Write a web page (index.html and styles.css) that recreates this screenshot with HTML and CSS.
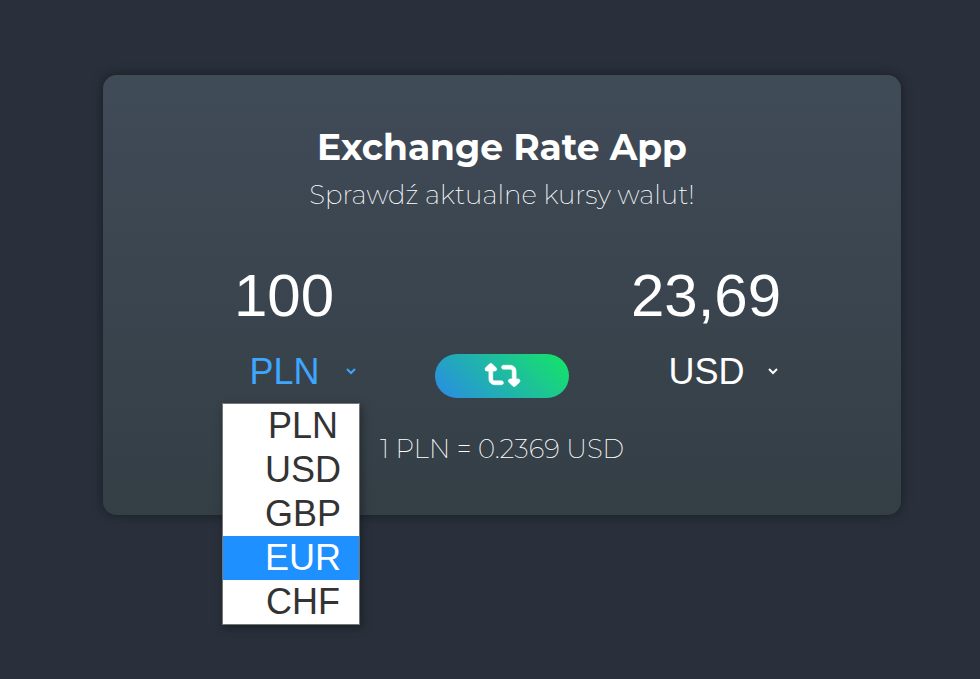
FILE: index.html
```html
<!DOCTYPE html>
<html lang="pl">
<head>
<meta charset="utf-8">
<meta name="viewport" content="width=device-width, initial-scale=1">
<title>Exchange Rate App</title>
<link rel="stylesheet" href="styles.css">
</head>
<body>
<main class="card">
  <h1 class="title">Exchange Rate App</h1>
  <p class="subtitle">Sprawdź aktualne kursy walut!</p>
  <div class="converter">
    <div class="side">
      <input class="amount" type="text" inputmode="decimal" value="100" aria-label="Kwota">
      <div class="picker picker-open">
        <select class="currency" aria-label="Waluta źródłowa">
          <option selected>PLN</option><option>USD</option><option>GBP</option><option>EUR</option><option>CHF</option>
        </select>
        <svg class="chevron" viewBox="0 0 10 8" aria-hidden="true"><path d="M1 2l4 4 4-4"/></svg>
        <ul class="menu">
          <li class="item">PLN</li>
          <li class="item">USD</li>
          <li class="item">GBP</li>
          <li class="item item-active">EUR</li>
          <li class="item">CHF</li>
        </ul>
      </div>
    </div>
    <button class="swap" type="button" aria-label="Zamień waluty">
      <svg class="swap-icon" viewBox="0 0 576 512" aria-hidden="true"><path d="M272 416c17.700 0 32-14.300 32-32s-14.300-32-32-32H160c-17.700 0-32-14.300-32-32V192h32c12.900 0 24.600-7.800 29.600-19.800s2.200-25.700-6.900-34.900l-64-64c-12.500-12.500-32.800-12.500-45.300 0l-64 64c-9.200 9.200-11.900 22.900-6.900 34.900s16.600 19.800 29.600 19.800h32v128c0 53 43 96 96 96H272zM304 96c-17.700 0-32 14.300-32 32s14.300 32 32 32h112c17.700 0 32 14.300 32 32v128H416c-12.900 0-24.600 7.800-29.600 19.800s-2.200 25.700 6.900 34.900l64 64c12.500 12.500 32.800 12.500 45.300 0l64-64c9.200-9.200 11.900-22.900 6.900-34.900s-16.600-19.800-29.600-19.800h-32V192c0-53-43-96-96-96H304z"/></svg>
    </button>
    <div class="side">
      <input class="amount" type="text" value="23,69" readonly aria-label="Wynik">
      <div class="picker">
        <select class="currency" aria-label="Waluta docelowa">
          <option>PLN</option><option selected>USD</option><option>GBP</option><option>EUR</option><option>CHF</option>
        </select>
        <svg class="chevron" viewBox="0 0 10 8" aria-hidden="true"><path d="M1 2l4 4 4-4"/></svg>
      </div>
    </div>
  </div>
  <p class="rate">1 PLN = 0.2369 USD</p>
</main>
</body>
</html>
```
FILE: styles.css
```css
* {
  box-sizing: border-box;
}

body {
  margin: 0;
  padding: 75px 79px 52px 103px;
  min-height: 100vh;
  background: #29303b;
  color: #fff;
  font-family: Montserrat, Inter, sans-serif;
}

.card {
  padding: 50px 68px;
  border-radius: 14px;
  background: linear-gradient(#404b58, #343e45);
  box-shadow: 0 0 12px rgba(0, 0, 0, 0.4);
  text-align: center;
}

.title {
  margin: 0 0 10px;
  font-size: 36px;
  line-height: 44px;
  font-weight: 700;
}

.subtitle,
.rate {
  margin: 0;
  font-size: 26px;
  line-height: 32px;
  font-weight: 200;
}

.rate {
  margin-top: 30px;
}

.converter {
  display: grid;
  grid-template-columns: 1fr 134px 1fr;
  gap: 24px;
  align-items: end;
  margin-top: 49px;
}

.side {
  display: flex;
  flex-direction: column;
  align-items: center;
  gap: 10px;
}

.amount {
  width: 100%;
  height: 70px;
  padding: 0 14px 0 0;
  border: 0;
  background: none;
  color: inherit;
  font: 60px "Liberation Sans", Arial, sans-serif;
  text-align: center;
  outline: none;
}

.picker {
  position: relative;
  width: 138px;
  font: 36px "Liberation Sans", Arial, sans-serif;
}

.picker-open {
  color: #3ea6ff;
}

.currency {
  display: block;
  width: 100%;
  height: 63px;
  padding: 0 13px 1px 0;
  border: 0;
  appearance: none;
  background: none;
  color: inherit;
  font: inherit;
  text-align: center;
  text-align-last: center;
  outline: none;
}

.currency option {
  color: #333;
}

.chevron {
  position: absolute;
  top: 27px;
  right: 4px;
  width: 10px;
  height: 8px;
  fill: none;
  stroke: currentColor;
  stroke-width: 2;
  pointer-events: none;
}

.menu {
  position: absolute;
  top: 100%;
  left: 0;
  z-index: 1;
  width: 100%;
  margin: 0;
  padding: 0;
  border: 1px solid #767676;
  background: #fff;
  box-shadow: 2px 3px 8px rgba(0, 0, 0, 0.35);
  color: #333;
  list-style: none;
}

.item {
  padding-left: 24px;
  line-height: 44px;
}

.item-active {
  background: #1e90ff;
  color: #fff;
}

.swap {
  display: flex;
  align-items: center;
  justify-content: center;
  height: 44px;
  margin: 0 0 5px;
  padding: 0 0 2px;
  border: 0;
  border-radius: 22px;
  background: linear-gradient(45deg, #2a8be6, #14e664);
  color: #fff;
}

.swap-icon {
  width: 35px;
  height: 32px;
  overflow: visible;
  fill: currentColor;
  stroke: currentColor;
  stroke-width: 10;
}
```
